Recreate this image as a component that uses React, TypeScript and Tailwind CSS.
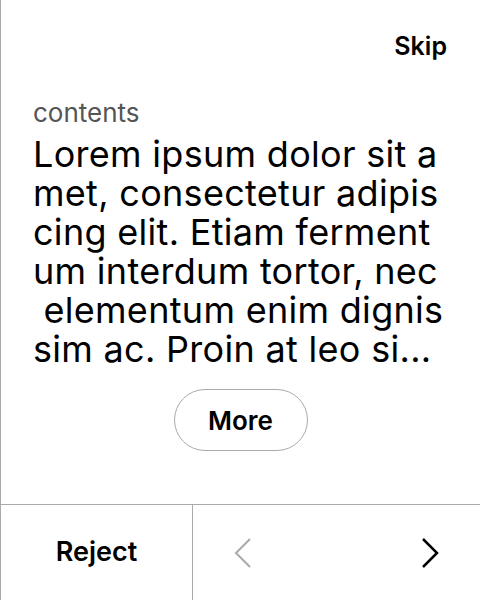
export default function App() {
  const lines = [
    "Lorem ipsum dolor sit a",
    "met, consectetur adipis",
    "cing elit. Etiam ferment",
    "um interdum tortor, nec",
    " elementum enim dignis",
    "sim ac. Proin at leo si...",
  ];

  return (
    <div className="flex h-[600px] w-[480px] flex-col border-l border-[#aaaaaa] bg-white font-['Inter','Liberation_Sans',sans-serif] text-black">
      {/* top: skip */}
      <div className="flex justify-end px-[33px] pt-[31px]">
        <button className="text-[25px] font-semibold leading-[30px]">Skip</button>
      </div>

      {/* body */}
      <div className="flex flex-1 flex-col px-[32px] pt-[37px]">
        <p className="text-[26px] leading-[30px] text-[#555555]">contents</p>
        <p className="mt-[7px] text-[36px] leading-[39px] tracking-[0.3px]">
          {lines.map((l, i) => (
            <span key={i} className="block whitespace-pre">
              {l}
            </span>
          ))}
        </p>
        <div className="mt-[20px] flex justify-center">
          <button className="h-[62px] w-[134px] rounded-full border-[1.5px] border-[#aaaaaa] text-[26px] font-semibold">
            More
          </button>
        </div>
      </div>

      {/* bottom bar */}
      <div className="flex h-[96px] border-t border-[#aaaaaa]">
        <button className="w-[192px] border-r border-[#aaaaaa] text-[27px] font-semibold">Reject</button>
        <div className="flex flex-1 items-center justify-between px-[40px]">
          <svg width="20" height="32" viewBox="0 0 20 32" fill="none" stroke="#aaaaaa" strokeWidth="2">
            <polyline points="17,2 3,16 17,30" />
          </svg>
          <svg width="20" height="32" viewBox="0 0 20 32" fill="none" stroke="#000000" strokeWidth="2.5">
            <polyline points="3,2 17,16 3,30" />
          </svg>
        </div>
      </div>
    </div>
  );
}
